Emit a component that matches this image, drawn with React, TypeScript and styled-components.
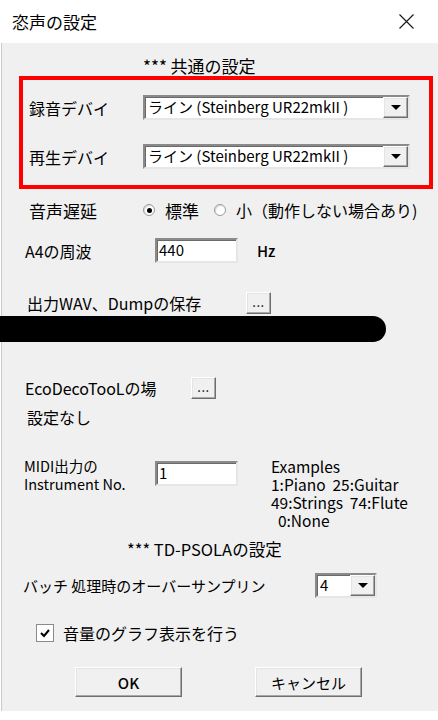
import React from 'react';
import styled, { createGlobalStyle, css } from 'styled-components';

const GlobalStyle = createGlobalStyle`
  html, body {
    margin: 0;
    padding: 0;
    background: #ffffff;
  }
  body {
    font-family: "Noto Sans CJK JP", "Noto Sans", sans-serif;
    color: #000000;
  }
`;

const sunken = css`
  background: #ffffff;
  box-sizing: border-box;
  border-style: solid;
  border-width: 2px;
  border-color: #8a8a8a #e6e6e6 #e6e6e6 #8a8a8a;
  box-shadow: inset 1px 1px 0 #6a6a6a;
`;

const raised = css`
  box-sizing: border-box;
  background: #f0f0f0;
  border-style: solid;
  border-width: 1px;
  border-color: #ffffff #6e6e6e #6e6e6e #ffffff;
  box-shadow: inset -1px -1px 0 #a8a8a8, inset 1px 1px 0 #e4e4e4;
`;

const Window = styled.div`
  width: 438px;
  height: 720px;
  background: #ffffff;
  overflow: hidden;
`;

const TitleBar = styled.div`
  height: 43px;
  display: flex;
  align-items: center;
  justify-content: space-between;
  padding: 0 24px 0 12px;
  font-size: 17px;
`;

const CloseIcon = styled.svg`
  width: 15px;
  height: 15px;
`;

const Body = styled.div`
  height: 668px;
  margin-left: 1px;
  border-left: 1px solid #c9c9c9;
  background: #f0f0f0;
  display: flex;
  flex-direction: column;
  align-items: flex-start;
`;

const SectionTitle = styled.div<{ $top: number; $left: number; $size: number }>`
  margin-top: ${({ $top }) => $top}px;
  margin-left: ${({ $left }) => $left}px;
  height: 21px;
  line-height: 21px;
  font-size: ${({ $size }) => $size}px;
  white-space: nowrap;
`;

const RedBox = styled.div`
  margin-left: 17px;
  width: 414px;
  height: 113px;
  box-sizing: border-box;
  border: 4px solid #ff0000;
  padding: 15px 0 0 6px;
  display: flex;
  flex-direction: column;
  gap: 24px;
`;

const Row = styled.div<{ $top: number; $left: number; $height: number }>`
  display: flex;
  align-items: center;
  margin-top: ${({ $top }) => $top}px;
  margin-left: ${({ $left }) => $left}px;
  height: ${({ $height }) => $height}px;
`;

const Label = styled.div<{ $width: number; $size?: number }>`
  width: ${({ $width }) => $width}px;
  flex-shrink: 0;
  font-size: ${({ $size }) => $size ?? 16}px;
  white-space: nowrap;
`;

const Select = styled.div<{ $width: number }>`
  ${sunken};
  width: ${({ $width }) => $width}px;
  height: 100%;
  display: flex;
  align-items: stretch;
`;

const SelectText = styled.div`
  flex: 1;
  padding-left: 3px;
  font-size: 15px;
  line-height: 20px;
  white-space: nowrap;
  overflow: hidden;
`;

const DropButton = styled.div`
  ${raised};
  width: 25px;
  display: flex;
  align-items: center;
  justify-content: center;
`;

const Arrow = styled.div`
  width: 0;
  height: 0;
  border-left: 5px solid transparent;
  border-right: 5px solid transparent;
  border-top: 5px solid #000000;
`;

const Radio = styled.span<{ $checked?: boolean }>`
  width: 12px;
  height: 12px;
  box-sizing: border-box;
  border-radius: 50%;
  border: 1px solid #9a9a9a;
  background: #ffffff;
  box-shadow: inset 1px 1px 1px #d8d8d8;
  display: inline-flex;
  align-items: center;
  justify-content: center;
  flex-shrink: 0;
  &::after {
    content: '';
    width: 5px;
    height: 5px;
    border-radius: 50%;
    background: ${({ $checked }) => ($checked ? '#000000' : 'transparent')};
  }
`;

const RadioText = styled.span<{ $gap: number; $size: number }>`
  margin-left: 10px;
  margin-right: ${({ $gap }) => $gap}px;
  font-size: ${({ $size }) => $size}px;
  white-space: nowrap;
`;

const TextInput = styled.div<{ $width: number }>`
  ${sunken};
  width: ${({ $width }) => $width}px;
  height: 25px;
  padding-left: 2px;
  font-size: 15px;
  line-height: 19px;
  align-self: flex-start;
`;

const Unit = styled.div`
  margin-left: 19px;
  font-size: 15px;
  font-weight: 500;
`;

const DotsButton = styled.div`
  ${raised};
  width: 25px;
  height: 22px;
  font-size: 13px;
  line-height: 17px;
  text-align: center;
  letter-spacing: 0.5px;
`;

const Redacted = styled.div`
  margin-top: 2px;
  margin-left: -2px;
  width: 386px;
  height: 26px;
  background: #000000;
  border-radius: 0 13px 13px 0;
`;

const Plain = styled.div<{ $top: number; $left: number }>`
  margin-top: ${({ $top }) => $top}px;
  margin-left: ${({ $left }) => $left}px;
  font-size: 16px;
  line-height: 20px;
  white-space: nowrap;
`;

const MidiBlock = styled.div`
  margin-top: 30px;
  margin-left: 22px;
  display: flex;
  align-items: flex-start;
`;

const Lines = styled.div<{ $width?: number; $size: number }>`
  width: ${({ $width }) => ($width ? `${$width}px` : 'auto')};
  font-size: ${({ $size }) => $size}px;
  line-height: 18px;
  white-space: pre;
`;

const MidiInput = styled(TextInput)`
  margin-top: 4px;
  margin-right: 33px;
`;

const CheckRow = styled(Row)`
  gap: 9px;
`;

const CheckBox = styled.span`
  width: 18px;
  height: 18px;
  box-sizing: border-box;
  border: 1px solid #8a8a8a;
  background: #ffffff;
  display: inline-flex;
  align-items: center;
  justify-content: center;
`;

const CheckText = styled.div`
  font-size: 16px;
  white-space: nowrap;
`;

const ButtonRow = styled.div`
  margin-top: 24px;
  margin-left: 73px;
  display: flex;
  gap: 73px;
`;

const PushButton = styled.div<{ $bold?: boolean }>`
  ${raised};
  width: 107px;
  height: 30px;
  display: flex;
  align-items: center;
  justify-content: center;
  font-size: 15px;
  font-weight: ${({ $bold }) => ($bold ? 500 : 400)};
`;

const DeviceSelect = ({ label }: { label: string }) => (
  <Row $top={0} $left={0} $height={25}>
    <Label $width={114}>{label}</Label>
    <Select $width={267}>
      <SelectText>ライン (Steinberg UR22mkII )</SelectText>
      <DropButton>
        <Arrow />
      </DropButton>
    </Select>
  </Row>
);

const App = () => {
  return (
    <Window>
      <GlobalStyle />
      <TitleBar>
        <span>恣声の設定</span>
        <CloseIcon viewBox="0 0 15 15">
          <path d="M0.5 0.5 L14.5 14.5 M14.5 0.5 L0.5 14.5" stroke="#1a1a1a" strokeWidth="1.2" fill="none" />
        </CloseIcon>
      </TitleBar>
      <Body>
        <SectionTitle $top={12} $left={141} $size={17}>*** 共通の設定</SectionTitle>
        <RedBox>
          <DeviceSelect label="録音デバイ" />
          <DeviceSelect label="再生デバイ" />
        </RedBox>

        <Row $top={9} $left={27} $height={24}>
          <Label $width={114} $size={17}>音声遅延</Label>
          <Radio $checked />
          <RadioText $gap={15} $size={17}>標準</RadioText>
          <Radio />
          <RadioText $gap={0} $size={16}>小（動作しない場合あり)</RadioText>
        </Row>

        <Row $top={16} $left={23} $height={25}>
          <Label $width={130}>A4の周波</Label>
          <TextInput $width={83}>440</TextInput>
          <Unit>Hz</Unit>
        </Row>

        <Row $top={29} $left={25} $height={22}>
          <Label $width={219}>出力WAV、Dumpの保存</Label>
          <DotsButton>...</DotsButton>
        </Row>
        <Redacted />

        <Row $top={35} $left={23} $height={22}>
          <Label $width={166}>EcoDecoTooLの場</Label>
          <DotsButton>...</DotsButton>
        </Row>
        <Plain $top={8} $left={25}>設定なし</Plain>

        <MidiBlock>
          <Lines $width={131} $size={14.5}>{'MIDI出力の\nInstrument No.'}</Lines>
          <MidiInput $width={83}>1</MidiInput>
          <Lines $size={15.5}>{'Examples\n1:Piano  25:Guitar\n49:Strings  74:Flute\n  0:None'}</Lines>
        </MidiBlock>

        <SectionTitle $top={10} $left={125} $size={16.5}>*** TD-PSOLAの設定</SectionTitle>

        <Row $top={13} $left={21} $height={25}>
          <Label $width={292} $size={15}>バッチ 処理時のオーバーサンプリン</Label>
          <Select $width={62}>
            <SelectText>4</SelectText>
            <DropButton>
              <Arrow />
            </DropButton>
          </Select>
        </Row>

        <CheckRow $top={25} $left={34} $height={20}>
          <CheckBox>
            <svg width="12" height="12" viewBox="0 0 12 12">
              <path d="M2 6 L5 9 L10 3" stroke="#000" strokeWidth="2" fill="none" />
            </svg>
          </CheckBox>
          <CheckText>音量のグラフ表示を行う</CheckText>
        </CheckRow>

        <ButtonRow>
          <PushButton $bold>OK</PushButton>
          <PushButton>キャンセル</PushButton>
        </ButtonRow>
      </Body>
    </Window>
  );
};

export default App;
